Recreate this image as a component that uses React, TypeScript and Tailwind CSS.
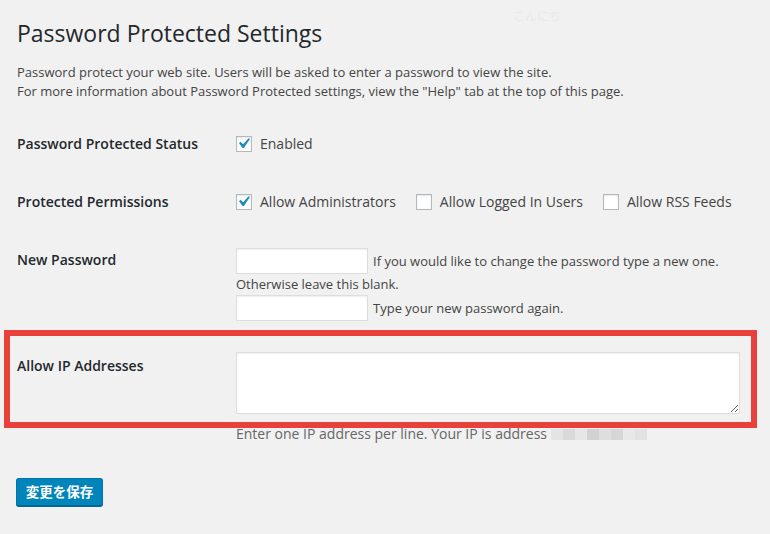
const font = { fontFamily: '"Open Sans", "Noto Sans CJK JP", sans-serif' };

function Check({ checked, label }: { checked: boolean; label: string }) {
  return (
    <label className="flex items-center gap-2">
      <span className="relative h-4 w-4 border border-[#b4b9be] bg-white shadow-[inset_0_1px_2px_rgba(0,0,0,0.1)]">
        {checked && (
          <svg className="absolute -left-[4px] -top-[4px]" width="21" height="21" viewBox="0 0 20 20">
            <path d="M14.83 4.89l1.34.94-5.81 8.38H9.02L5.78 9.67l1.34-1.25 2.57 2.4z" fill="#1e8cbe" />
          </svg>
        )}
      </span>
      <span>{label}</span>
    </label>
  );
}

function TextInput() {
  return (
    <input
      type="password"
      className="h-[26px] w-[132px] border border-[#ddd] bg-white shadow-[inset_0_1px_2px_rgba(0,0,0,0.07)] outline-none"
    />
  );
}

const ipBlocks = ['#e4e4e4', '#d9d9d9', '#e6e6e6', '#d2d2d2', '#dedede', '#d6d6d6', '#e8e8e8', '#e2e2e2'];

export default function App() {
  return (
    <div style={font} className="relative h-[534px] w-[770px] overflow-hidden bg-[#f1f1f1] text-[13px] text-[#444]">
      <span className="absolute left-[513px] top-[8px] text-[12px] text-[#e9e9e9]">こんにち</span>

      <div className="pl-[17px] pr-3">
        <h1 className="pt-[19px] text-[23px] leading-[29px] text-[#23282d]">Password Protected Settings</h1>

        <div className="mt-[15px] leading-[19px]">
          <p>Password protect your web site. Users will be asked to enter a password to view the site.</p>
          <p>For more information about Password Protected settings, view the "Help" tab at the top of this page.</p>
        </div>

        {/* status */}
        <div className="mt-[33px] flex text-[14px] leading-[20px]">
          <div className="w-[219px] font-semibold text-[#23282d]">Password Protected Status</div>
          <Check checked label="Enabled" />
        </div>

        {/* permissions */}
        <div className="mt-[38px] flex text-[14px] leading-[20px]">
          <div className="w-[219px] font-semibold text-[#23282d]">Protected Permissions</div>
          <div className="flex gap-[20px]">
            <Check checked label="Allow Administrators" />
            <Check checked={false} label="Allow Logged In Users" />
            <Check checked={false} label="Allow RSS Feeds" />
          </div>
        </div>

        {/* new password */}
        <div className="mt-[36px] flex text-[14px] leading-[20px]">
          <div className="w-[219px] pt-[2px] font-semibold text-[#23282d]">New Password</div>
          <div className="text-[13px]">
            <div className="flex items-center gap-[5px]">
              <TextInput />
              <span>If you would like to change the password type a new one.</span>
            </div>
            <div className="leading-[21px]">Otherwise leave this blank.</div>
            <div className="flex items-center gap-[5px]">
              <TextInput />
              <span>Type your new password again.</span>
            </div>
          </div>
        </div>
      </div>

      {/* ip addresses */}
      <div className="ml-[4px] mt-[9px] flex w-[753px] border-[6px] border-[#e8403a] pb-[8px] pl-[7px] pr-[11px] pt-[16px]">
        <div className="w-[219px] pt-[4px] text-[14px] font-semibold leading-[20px] text-[#23282d]">Allow IP Addresses</div>
        <textarea className="h-[62px] flex-1 border border-[#ddd] bg-white shadow-[inset_0_1px_2px_rgba(0,0,0,0.07)] outline-none" />
      </div>
      <div className="-mt-[2px] flex items-center pl-[236px] text-[14px] leading-[16px] text-[#666]">
        <span>Enter one IP address per line. Your IP is address</span>
        <span className="ml-[4px] flex h-[11px]">
          {ipBlocks.map((c, i) => (
            <span key={i} className="h-[11px] w-[12px]" style={{ backgroundColor: c }} />
          ))}
        </span>
      </div>

      <div className="pl-[16px] pt-[36px]">
        <button className="h-[28px] w-[87px] rounded-[3px] border border-[#0073aa] border-b-[#006799] bg-[#0085ba] text-[13.5px] font-semibold text-white shadow-[0_1px_0_#006799]">
          変更を保存
        </button>
      </div>
    </div>
  );
}
